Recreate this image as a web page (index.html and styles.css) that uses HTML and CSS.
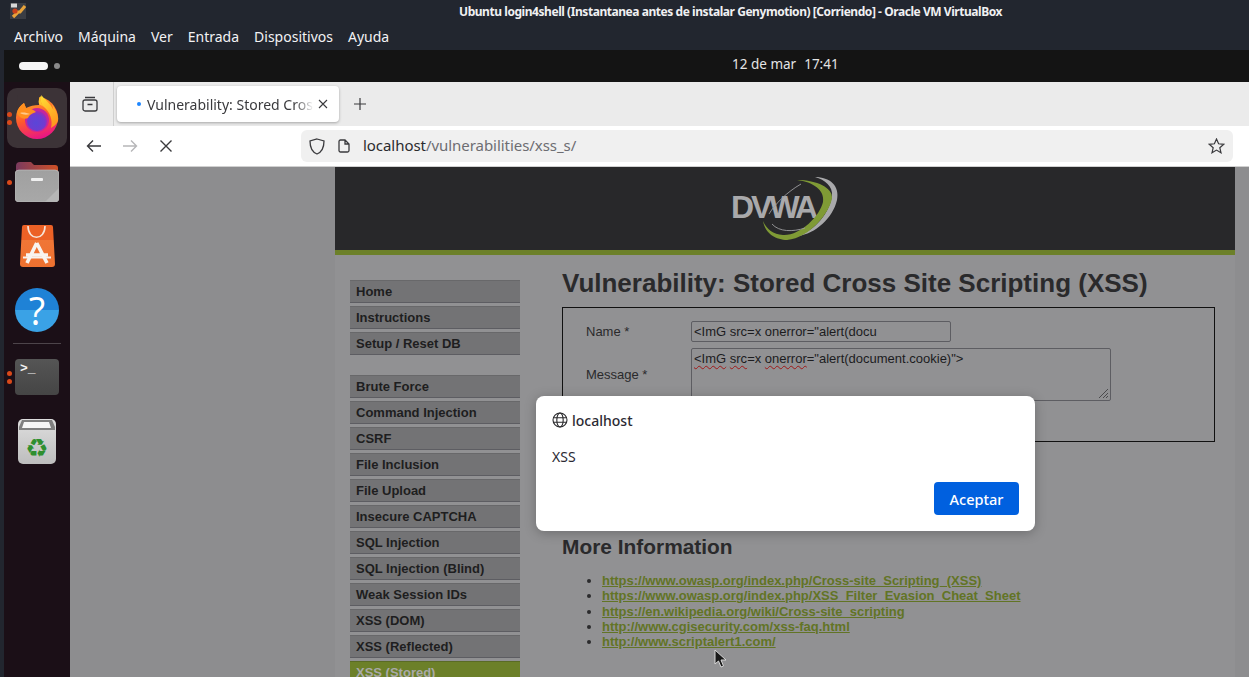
FILE: index.html
```html
<!DOCTYPE html>
<html lang="es">
<head>
<meta charset="utf-8">
<title>Ubuntu login4shell</title>
<link rel="stylesheet" href="styles.css">
</head>
<body>
<div class="host">
  <header class="vb-title">
    <svg class="vb-icon" width="16" height="16" viewBox="0 0 16 16"><rect width="16" height="16" fill="#3a3d44"/><path d="M3 14 L8 9 L10 9 L15 3" stroke="#e8a33a" stroke-width="3.2" fill="none"/><circle cx="5" cy="8" r="2.6" fill="#c8401c"/><rect x="1" y="0.5" width="6" height="4" fill="#d8d8d8"/></svg>
    <span class="vb-title-text">Ubuntu login4shell (Instantanea antes de instalar Genymotion) [Corriendo] - Oracle VM VirtualBox</span>
  </header>
  <nav class="vb-menu">
    <span>Archivo</span><span>Máquina</span><span>Ver</span><span>Entrada</span><span>Dispositivos</span><span>Ayuda</span>
  </nav>
  <div class="guest">
    <div class="gnome-bar">
      <div class="workspaces"><i class="ws-active"></i><i class="ws-dot"></i></div>
      <div class="clock"><span>12 de mar</span><span>17:41</span></div>
    </div>
    <div class="desktop">
      <aside class="dock">
        <div class="dock-item dock-active">
          <div class="run-dots"><i></i><i></i></div>
          <svg width="44" height="46" viewBox="0 0 44 46"><defs><linearGradient id="ff" x1="0.3" y1="0" x2="0.6" y2="1"><stop offset="0" stop-color="#ffb02a"/><stop offset="0.5" stop-color="#ff5a2c"/><stop offset="1" stop-color="#e8118a"/></linearGradient><linearGradient id="ffy" x1="0" y1="0" x2="0.4" y2="1"><stop offset="0" stop-color="#ffdf35"/><stop offset="1" stop-color="#ff9a1f"/></linearGradient><radialGradient id="ffp" cx="0.45" cy="0.6" r="0.6"><stop offset="0" stop-color="#5a46d8"/><stop offset="0.7" stop-color="#6f3cd0"/><stop offset="1" stop-color="#a12ab5"/></radialGradient></defs><circle cx="22" cy="23" r="21" fill="url(#ff)"/><path d="M3 -1H24V10C19 10 15 11 11 13L9 8C6 10 3 13 1 17Z" fill="#3c3337"/><path d="M26.500 0.300C25 6 26 9 29 12C35 17 38 25 36 33C41 30 44 27 43 22C42 16 40 14 37 9L38.500 15C35 8 30 5 26.500 0.300Z" fill="url(#ffy)"/><path d="M26.500 0.300C25 6 26 9 29 12L24 9C23 6 24 3 26.500 0.300Z" fill="#ffc62e"/><circle cx="22" cy="25" r="12" fill="#c5279b"/><circle cx="22" cy="26" r="10" fill="url(#ffp)"/><path d="M2 18C3 13 6 10 9 8L11 13C15 13 19 15 21 17C18 18 14 20 13 23C8 25 4 22 2 18Z" fill="#ff8f1f"/><path d="M5 18C8 17 12 18 15 19C12 20 8 20 5 18Z" fill="#ffc98a"/></svg>
        </div>
        <div class="dock-item">
          <div class="run-dots"><i></i></div>
          <svg width="44" height="40" viewBox="0 0 44 40"><defs><linearGradient id="ftop" x1="0" x2="1" y1="0" y2="0"><stop offset="0" stop-color="#7a3a5e"/><stop offset="1" stop-color="#cf5026"/></linearGradient><linearGradient id="fbody" x1="0" x2="0" y1="0" y2="1"><stop offset="0" stop-color="#a0a0a0"/><stop offset="1" stop-color="#a8a8a8"/></linearGradient></defs><path d="M1 4a4 4 0 0 1 4-4h11l3 3h21a3 3 0 0 1 3 3v8H1Z" fill="url(#ftop)"/><rect y="8" width="44" height="32" rx="4" fill="url(#fbody)" stroke="#c4c4c4" stroke-width=".6"/><path d="M44 26V36a4 4 0 0 1-4 4H30Z" fill="#b6b6b6"/><rect x="16" y="16" width="12" height="3" rx="1" fill="#f0f0f0"/></svg>
        </div>
        <div class="dock-item">
          <svg width="35" height="42" viewBox="0 0 35 42"><defs><linearGradient id="astop" x1="0" x2="0" y1="0" y2="1"><stop offset="0" stop-color="#ec6126"/><stop offset="0.35" stop-color="#ec6126"/><stop offset="0.36" stop-color="#f07636"/><stop offset="1" stop-color="#ee7130"/></linearGradient></defs><path d="M4 0H31a2 2 0 0 1 2 2L35 39a3 3 0 0 1-3 3H3a3 3 0 0 1-3-3L2 2A2 2 0 0 1 4 0Z" fill="url(#astop)"/><path d="M8 1C8 16 25 16 25 1" fill="none" stroke="#f6e4d8" stroke-width="1.6"/><path d="M16.700 18L7 38M16.700 18L27 38M6 30H28" stroke="#f8f4f0" stroke-width="3.600" fill="none"/><path d="M3 32.500H31" stroke="#f8f4f0" stroke-width="2"/></svg>
        </div>
        <div class="dock-item">
          <div class="help-icon">?</div>
        </div>
        <hr class="dock-sep">
        <div class="dock-item">
          <div class="run-dots"><i></i><i></i></div>
          <div class="term-icon">&gt;_</div>
        </div>
        <div class="dock-item">
          <svg width="38" height="45" viewBox="0 0 38 45"><defs><linearGradient id="tr" x1="0" x2="0" y1="0" y2="1"><stop offset="0" stop-color="#dedede"/><stop offset="1" stop-color="#bdbdbd"/></linearGradient></defs><rect width="38" height="45" rx="5" fill="url(#tr)"/><path d="M4 1H34L37 8V11H1V8Z" fill="#7f7f7f"/><path d="M6 3H31L33 9H4Z" fill="#f6f6f6"/><text x="19" y="38" text-anchor="middle" class="recycle">♻</text></svg>
        </div>
      </aside>
      <main class="firefox">
        <div class="ff-tabs">
          <div class="ff-views">
            <svg width="18" height="18" viewBox="0 0 18 18" fill="none" stroke="#3a3a3d" stroke-width="1.3"><rect x="2" y="5" width="14" height="11" rx="2"/><path d="M4 2.500h10M6.500 9.500h5"/></svg>
          </div>
          <div class="ff-tab">
            <i class="tab-dot"></i>
            <span class="tab-label">Vulnerability: Stored Cros</span>
            <svg width="10" height="10" viewBox="0 0 10 10" stroke="#3a3a3d" stroke-width="1.1"><path d="M1 1L9 9M9 1L1 9"/></svg>
          </div>
          <svg class="tab-new" width="14" height="14" viewBox="0 0 14 14" stroke="#3a3a3d" stroke-width="1.2"><path d="M7 1V13M1 7H13"/></svg>
        </div>
        <div class="ff-nav">
          <svg class="nav-back" width="16" height="14" viewBox="0 0 16 14" fill="none" stroke="#3a3a3d" stroke-width="1.4"><path d="M15 7H1.500M7 1.500L1.500 7L7 12.500"/></svg>
          <svg class="nav-fwd" width="16" height="14" viewBox="0 0 16 14" fill="none" stroke="#b6b6b8" stroke-width="1.4"><path d="M1 7H14.500M9 1.500L14.500 7L9 12.500"/></svg>
          <svg class="nav-stop" width="14" height="14" viewBox="0 0 14 14" stroke="#3a3a3d" stroke-width="1.4"><path d="M1.500 1.500L12.500 12.500M12.500 1.500L1.500 12.500"/></svg>
          <div class="urlbar">
            <svg class="shield" width="16" height="17" viewBox="0 0 16 17" fill="none" stroke="#3a3a3d" stroke-width="1.3"><path d="M8 1L15 3C15 10 13 14 8 16C3 14 1 10 1 3Z"/></svg>
            <svg class="page" width="12" height="14" viewBox="0 0 12 14" fill="none" stroke="#3a3a3d" stroke-width="1.3"><path d="M1 2.500A1.500 1.500 0 0 1 2.500 1H7L11 5V11.500A1.500 1.500 0 0 1 9.500 13H2.500A1.500 1.500 0 0 1 1 11.500ZM7 1V5H11"/></svg>
            <span class="url"><b>localhost</b>/vulnerabilities/xss_s/</span>
            <svg class="star" width="17" height="16" viewBox="0 0 17 16" fill="none" stroke="#3a3a3d" stroke-width="1.2"><path d="M8.500 1L10.600 5.800L15.800 6.300L11.800 9.700L13 14.800L8.500 12.100L4 14.800L5.200 9.700L1.200 6.300L6.400 5.800Z"/></svg>
          </div>
        </div>
        <div class="viewport">
          <div class="dvwa">
            <div class="dvwa-head">
              <div class="logo">
                <span class="logo-text">DVWA</span>
                <svg width="120" height="72" viewBox="0 0 120 72" fill="none"><path d="M73 64C90 62 108 46 112 28C115 14 105 5 90 5C100 8 108 14 107 24C104 42 90 58 73 64Z" fill="#a9a9ab"/><path d="M38 49C40 62 52 68 62 68C85 66 105 40 107 26C108 16 92 8 72 8C88 10 100 18 98 30C95 44 75 64 58 63C48 62 42 58 38 49Z" fill="#7f9a35"/><path d="M44 42C50 32 62 20 76 12M47 52C54 60 68 60 80 56" stroke="#9c9c9e" stroke-width=".9"/></svg>
              </div>
            </div>
            <div class="dvwa-band"></div>
            <div class="dvwa-body">
              <div class="side">
                <ul class="menu">
                  <li>Home</li><li>Instructions</li><li>Setup / Reset DB</li>
                </ul>
                <ul class="menu">
                  <li>Brute Force</li><li>Command Injection</li><li>CSRF</li><li>File Inclusion</li><li>File Upload</li><li>Insecure CAPTCHA</li><li>SQL Injection</li><li>SQL Injection (Blind)</li><li>Weak Session IDs</li><li>XSS (DOM)</li><li>XSS (Reflected)</li><li class="menu-on">XSS (Stored)</li>
                </ul>
              </div>
              <div class="content">
                <h1>Vulnerability: Stored Cross Site Scripting (XSS)</h1>
                <div class="vuln-box">
                  <div class="form-row row-name">
                    <label>Name *</label>
                    <div class="fake-input">&lt;ImG src=x onerror="alert(docu</div>
                  </div>
                  <div class="form-row row-msg">
                    <label>Message *</label>
                    <div class="fake-area"><span class="sp">&lt;ImG</span> <span class="sp">src</span>=x <span class="sp">onerror</span>="alert(document.cookie)"&gt;<svg class="grip" width="11" height="11" viewBox="0 0 11 11" stroke="#4a4a4c"><path d="M1 10L10 1M5 10L10 5M8 10L10 8"/></svg></div>
                  </div>
                </div>
                <h2>More Information</h2>
                <ul class="links">
                  <li><a>https://www.owasp.org/index.php/Cross-site_Scripting_(XSS)</a></li>
                  <li><a>https://www.owasp.org/index.php/XSS_Filter_Evasion_Cheat_Sheet</a></li>
                  <li><a>https://en.wikipedia.org/wiki/Cross-site_scripting</a></li>
                  <li><a>http://www.cgisecurity.com/xss-faq.html</a></li>
                  <li><a>http://www.scriptalert1.com/</a></li>
                </ul>
              </div>
            </div>
          </div>
          <div class="alert">
            <div class="alert-host">
              <svg width="16" height="16" viewBox="0 0 16 16" fill="none" stroke="#2a2a2d" stroke-width="1.1"><circle cx="8" cy="8" r="7"/><ellipse cx="8" cy="8" rx="3.200" ry="7"/><path d="M1 5.800H15M1 10.200H15"/></svg>
              <span>localhost</span>
            </div>
            <p class="alert-msg">XSS</p>
            <div class="alert-actions"><button class="alert-ok">Aceptar</button></div>
          </div>
          <svg class="cursor" width="13" height="19" viewBox="0 0 13 19"><path d="M1 1V15L4.500 12L7 18L9.500 17L7 11H12Z" fill="#1a1a1a" stroke="#d8d8d8" stroke-width="1"/></svg>
        </div>
      </main>
    </div>
  </div>
</div>
</body>
</html>
```
FILE: styles.css
```css
* { box-sizing: border-box; }
html, body { margin: 0; padding: 0; }
body { width: 1249px; height: 677px; overflow: hidden; background: #22262f; font-family: "Noto Sans", sans-serif; }
.host { width: 1249px; height: 677px; display: flex; flex-direction: column; overflow: hidden; }

.vb-title { height: 24px; flex: none; display: flex; align-items: center; padding-left: 459px; position: relative; background: #22262f; color: #f0f0f2; }
.vb-icon { position: absolute; left: 10px; top: 3px; }
.vb-title-text { font-size: 12px; font-weight: 700; letter-spacing: -0.445px; margin-top: -2px; white-space: nowrap; }
.vb-menu { height: 26px; flex: none; display: flex; gap: 15px; align-items: center; padding: 0 0 1px 14px; background: #22262f; color: #f2f2f4; font-size: 14px; }

.guest { flex: 1; min-height: 0; margin-left: 4px; display: flex; flex-direction: column; background: #141414; }
.gnome-bar { height: 32px; flex: none; position: relative; display: flex; align-items: center; padding: 0 0 4px 728px; color: #e4e4e4; font-size: 13.500px; }
.workspaces { position: absolute; left: 15px; top: 12px; display: flex; gap: 6px; align-items: center; }
.ws-active { width: 29px; height: 8px; border-radius: 4px; background: #f5f5f5; }
.ws-dot { width: 6px; height: 6px; border-radius: 3px; background: #8a8a8a; }
.clock { display: flex; gap: 8px; }

.desktop { flex: 1; min-height: 0; display: flex; }
.dock { width: 66px; flex: none; background: #1b0f17; display: flex; flex-direction: column; align-items: center; padding-top: 6px; }
.dock-item { width: 60px; height: 60px; flex: none; position: relative; display: flex; align-items: center; justify-content: center; margin-bottom: 4px; border-radius: 10px; }
.dock-active { background: #3c3337; }
.run-dots { position: absolute; left: 0; top: 0; bottom: 0; display: flex; flex-direction: column; justify-content: center; gap: 3px; }
.run-dots i { width: 5px; height: 5px; border-radius: 50%; background: #d9491a; }
.help-icon { width: 44px; height: 44px; border-radius: 50%; background: linear-gradient(#1f82d6 0 50%, #3aa2e6 50% 100%); color: #fff; font-size: 38px; font-weight: 400; line-height: 44px; text-align: center; font-family: "Open Sans", sans-serif; }
.dock-sep { width: 48px; height: 1px; margin: -1px 0 3px; border: 0; background: #4d444a; flex: none; }
.term-icon { width: 44px; height: 36px; border-radius: 4px; background: linear-gradient(#555, #454545); color: #f2f2f2; font-family: "Liberation Mono", monospace; font-size: 13px; font-weight: 700; line-height: 20px; padding-left: 5px; }
.recycle { font-size: 26px; fill: #2f8f2f; font-family: "DejaVu Sans", sans-serif; }

.firefox { flex: 1; min-width: 0; display: flex; flex-direction: column; }
.ff-tabs { height: 44px; flex: none; background: #ebebeb; display: flex; align-items: center; }
.ff-views { width: 44px; height: 44px; padding-right: 4px; display: flex; align-items: center; justify-content: center; border-right: 1px solid #cfcfcf; }
.ff-tab { width: 222px; height: 36px; margin-left: 3px; background: #fff; border-radius: 4px; box-shadow: 0 1px 3px rgba(0,0,0,.3); display: flex; align-items: center; position: relative; padding-left: 20px; font-size: 14px; color: #3a3a3d; }
.tab-dot { width: 4px; height: 4px; border-radius: 50%; background: #1d86ff; flex: none; margin-right: 6px; }
.tab-label { width: 167px; overflow: hidden; white-space: nowrap; -webkit-mask-image: linear-gradient(90deg, #000 88%, transparent); mask-image: linear-gradient(90deg, #000 88%, transparent); }
.ff-tab svg { margin-left: 4px; }
.tab-new { margin-left: 14px; }
.ff-nav { height: 41px; flex: none; background: #fff; border-bottom: 1px solid #d0d0d0; display: flex; align-items: center; padding-left: 16px; }
.nav-fwd { margin-left: 20px; }
.nav-stop { margin-left: 21px; }
.urlbar { width: 932px; height: 32px; margin-left: 128px; background: #f0f0f0; border-radius: 6px; display: flex; align-items: center; padding-left: 8px; font-size: 15px; }
.shield { margin-top: 1px; }
.page { margin-left: 13px; }
.url { margin: -2px 0 0 13px; color: #6d6d72; flex: 1; letter-spacing: -0.05px; }
.url b { font-weight: 400; color: #2b2b2e; }
.star { margin-right: 8px; }

.viewport { flex: 1; min-height: 0; background: #8d8d8f; position: relative; overflow: hidden; }
.dvwa { width: 900px; margin-left: 265px; font-family: "Liberation Sans", Arial, sans-serif; font-size: 13px; color: #2a2a2c; background: #919193; }
.dvwa-head { height: 83px; background: #28282a; padding-left: 390px; }
.logo { width: 120px; height: 72px; position: relative; margin-top: 0; top: 5px; }
.logo svg { position: absolute; left: 0; top: 0; }
.logo-text { position: absolute; left: 6px; top: 17px; font-size: 32px; line-height: 37px; font-weight: 700; color: #a9a9ab; letter-spacing: -3px; }
.dvwa-band { height: 5px; background: #6c8029; }
.dvwa-body { display: flex; }
.side { width: 227px; flex: none; padding: 25px 0 0 15px; }
.menu { list-style: none; margin: 0 0 20px; padding: 0; }
.menu li { width: 170px; height: 23px; margin-bottom: 3px; padding-left: 6px; background: #737375; border-top: 1px solid #68686a; border-bottom: 1px solid #5d5d62; font-weight: 700; font-size: 13px; line-height: 21px; color: #1e1e20; }
.menu li.menu-on { background: #6c8029; color: #a9a9a9; border-color: #5a6b25; }
.content { flex: 1; min-width: 0; padding-right: 20px; }
h1 { margin: 11px 0 7px; font-size: 26px; line-height: 34px; font-weight: 700; color: #2a2a2c; white-space: nowrap; }
.vuln-box { height: 135px; border: 1px solid #111; padding: 13px 0 0 23px; }
.form-row { display: flex; }
.form-row label { width: 105px; flex: none; }
.row-name { align-items: center; height: 21px; }
.row-msg { margin-top: 6px; align-items: center; }
.fake-input { width: 260px; height: 21px; border: 1px solid #5d5d62; border-radius: 2px; padding-left: 2px; line-height: 19px; font-size: 13px; color: #1c1c1e; white-space: nowrap; overflow: hidden; background: #919193; }
.fake-area { width: 420px; height: 53px; border: 1px solid #5d5d62; border-radius: 2px; padding: 2px 2px; font-size: 13px; line-height: 15px; color: #1c1c1e; position: relative; background: #919193; }
.sp { text-decoration: underline wavy #a01818 1px; text-underline-offset: 2px; }
.grip { position: absolute; right: 1px; bottom: 1px; }
h2 { margin: 93px 0 0; font-size: 20.900px; line-height: 24px; font-weight: 700; color: #2a2a2c; }
.links { margin: 14px 0 0; padding-left: 40px; font-weight: 700; font-size: 13px; line-height: 15.250px; }
.links a { color: #627425; text-decoration: underline; }

.alert { position: absolute; left: 466px; top: 229px; width: 499px; height: 135px; background: #fff; border-radius: 8px; box-shadow: 0 2px 12px rgba(0,0,0,.25); padding: 16px 16px 16px; color: #2b2a33; font-size: 14px; display: flex; flex-direction: column; }
.alert-host { display: flex; align-items: center; gap: 4px; font-weight: 500; height: 16px; }
.alert-msg { margin: 19px 0 0; line-height: 20px; }
.alert-actions { margin-top: auto; display: flex; justify-content: flex-end; }
.alert-ok { width: 85px; height: 33px; border: 0; border-radius: 4px; background: #0060df; color: #fff; font: 500 14.500px "Noto Sans", sans-serif; padding: 0; }
.cursor { position: absolute; left: 644px; top: 482px; }
```
